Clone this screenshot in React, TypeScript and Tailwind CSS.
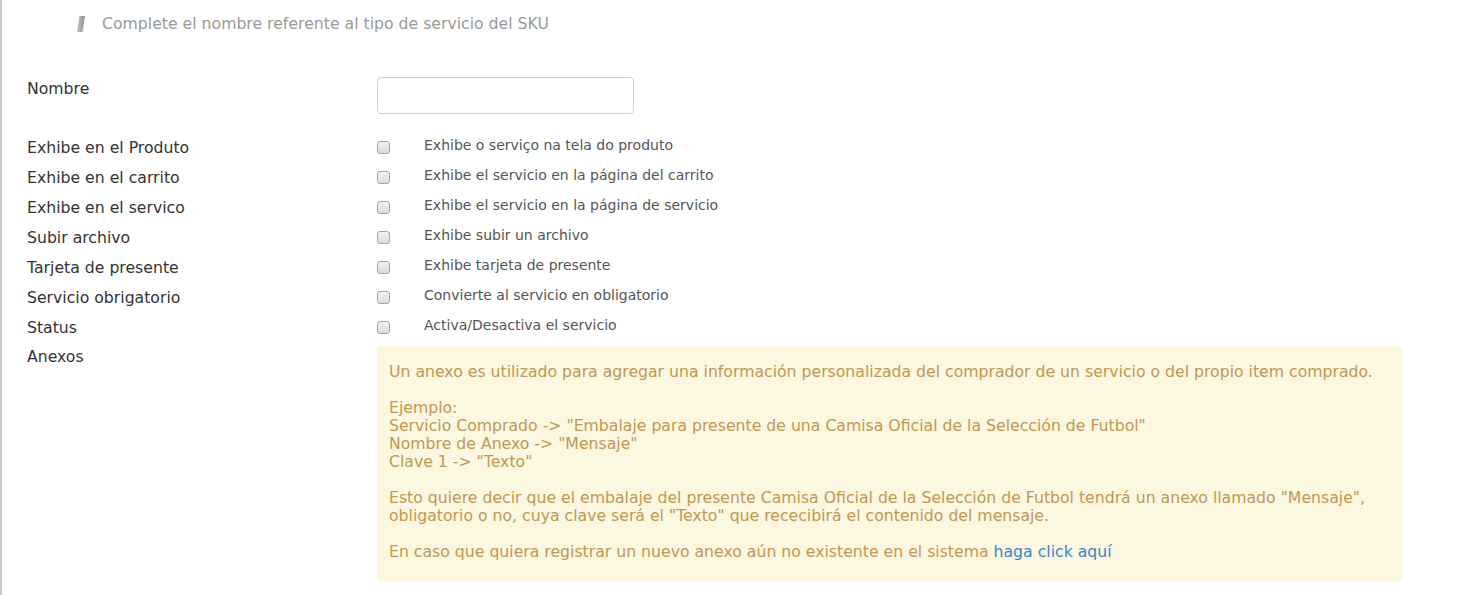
import React from 'react';

const FONT = { fontFamily: '"DejaVu Sans", "Open Sans", sans-serif' };

interface OptionRow {
  label: string;
  hint: string;
}

const options: OptionRow[] = [
  { label: 'Exhibe en el Produto', hint: 'Exhibe o serviço na tela do produto' },
  { label: 'Exhibe en el carrito', hint: 'Exhibe el servicio en la página del carrito' },
  { label: 'Exhibe en el servico', hint: 'Exhibe el servicio en la página de servicio' },
  { label: 'Subir archivo', hint: 'Exhibe subir un archivo' },
  { label: 'Tarjeta de presente', hint: 'Exhibe tarjeta de presente' },
  { label: 'Servicio obrigatorio', hint: 'Convierte al servicio en obligatorio' },
  { label: 'Status', hint: 'Activa/Desactiva el servicio' },
];

const Checkbox = () => (
  <span className="block w-[13px] h-[13px] rounded-[3px] border border-[#a6a6a6] bg-gradient-to-b from-[#f2f2f2] to-[#dcdcdc]" />
);

const SlashIcon = () => (
  <svg width="8" height="16" viewBox="0 0 8 16">
    <defs>
      <linearGradient id="sl" x1="0" x2="1" y1="0" y2="0">
        <stop offset="0" stopColor="#c4c4c4" />
        <stop offset="1" stopColor="#8e8e8e" />
      </linearGradient>
    </defs>
    <polygon points="2.5,0 8,0 5.5,16 0,16" fill="url(#sl)" />
  </svg>
);

export default function App() {
  return (
    <div className="min-h-[595px] bg-white border-l-2 border-[#c9c9c9]" style={FONT}>
      <div className="flex items-center gap-[17px] pl-[75px] pt-[7px] h-[33px] box-content">
        <SlashIcon />
        <span className="text-[15.7px] text-[#999]">Complete el nombre referente al tipo de servicio del SKU</span>
      </div>

      <div className="pl-[25px] pt-[37px]">
        <div className="flex">
          <div className="w-[350px] text-[15.7px] text-[#333] leading-[20px] pt-[2px]">Nombre</div>
          <input className="w-[257px] h-[37px] rounded-[4px] border border-[#cfcfcf] bg-white px-2 outline-none" />
        </div>

        <div className="mt-[18px]">
          {options.map((o) => (
            <div key={o.label} className="flex h-[30px] items-center">
              <div className="w-[350px] text-[15.7px] text-[#333] pt-[2px]">{o.label}</div>
              <Checkbox />
              <span className="ml-[34px] text-[14px] text-[#555] -mt-[4px]">{o.hint}</span>
            </div>
          ))}
          <div className="flex mt-[4px]">
            <div className="w-[350px] text-[15.7px] text-[#333] pt-[1px] leading-[20px]">Anexos</div>
            <div className="w-[1025px] rounded-[4px] bg-[#fbf7e1] text-[#c09853] text-[15.7px] leading-[18px] pl-[12px] pr-4 pt-[17px] pb-[20px]">
              <p>Un anexo es utilizado para agregar una información personalizada del comprador de un servicio o del propio item comprado.</p>
              <p className="mt-[18px]">
                Ejemplo:<br />
                Servicio Comprado -&gt; "Embalaje para presente de una Camisa Oficial de la Selección de Futbol"<br />
                Nombre de Anexo -&gt; "Mensaje"<br />
                Clave 1 -&gt; "Texto"
              </p>
              <p className="mt-[18px]">
                Esto quiere decir que el embalaje del presente Camisa Oficial de la Selección de Futbol tendrá un anexo llamado "Mensaje",<br />
                obligatorio o no, cuya clave será el "Texto" que rececibirá el contenido del mensaje.
              </p>
              <p className="mt-[18px]">
                En caso que quiera registrar un nuevo anexo aún no existente en el sistema{' '}
                <a className="text-[#3a87c8] cursor-pointer">haga click aquí</a>
              </p>
            </div>
          </div>
        </div>
      </div>
    </div>
  );
}
